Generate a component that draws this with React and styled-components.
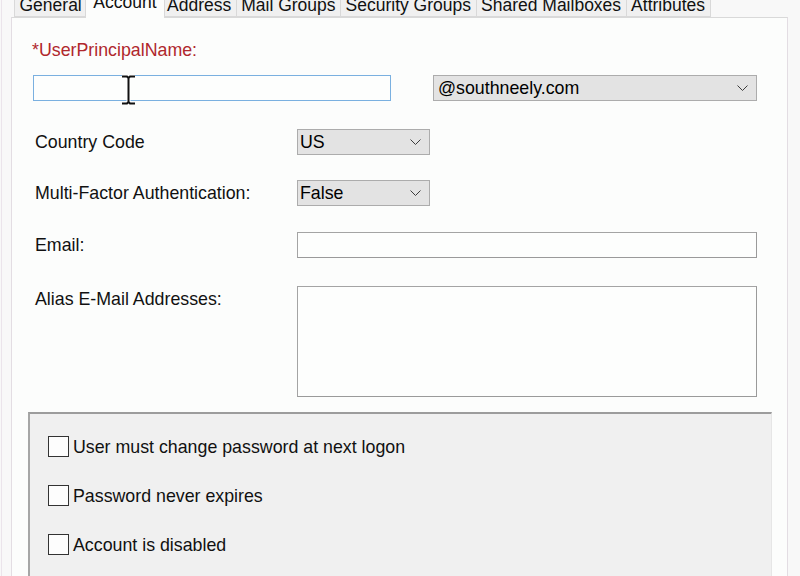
import React from "react";
import styled, { createGlobalStyle } from "styled-components";

const GlobalStyle = createGlobalStyle`
  html, body {
    margin: 0;
    padding: 0;
    background: #f8f8f8;
    overflow: hidden;
  }
  * {
    box-sizing: border-box;
  }
`;

const Page = styled.div`
  height: 576px;
  overflow: hidden;
  margin-left: 1px;
  padding-left: 9px;
  border-left: 1px solid #ebe4eb;
  font-family: "Liberation Sans", Arial, sans-serif;
  font-size: 17.8px;
  color: #111;
`;

const TabStrip = styled.div`
  display: flex;
  align-items: flex-end;
  margin-top: -11px;
  height: 28px;
  padding-left: 3px;
  font-size: 17.5px;
`;

const Tab = styled.div`
  position: relative;
  height: ${(p) => (p.$active ? "29px" : "25px")};
  margin: ${(p) => (p.$active ? "0 -2px -1px" : "0")};
  padding: 2px ${(p) => (p.$active ? "7px" : "4.5px")} 0;
  line-height: 20px;
  white-space: nowrap;
  background: ${(p) => (p.$active ? "#fcfdfc" : "#f0f0f0")};
  border: 1px solid #d9d9d9;
  border-bottom: ${(p) => (p.$active ? "none" : "1px solid #d9d9d9")};
  border-left: ${(p) => (p.$active ? "1px solid #d9d9d9" : "none")};
  z-index: ${(p) => (p.$active ? 1 : 0)};

  &:first-child {
    border-left: 1px solid #d9d9d9;
  }
`;

const Panel = styled.div`
  width: 777px;
  height: 600px;
  background: #fcfdfc;
  border: 1px solid #e3dde3;
  border-top-color: #d9d9d9;
  padding: 0 30px 0 20px;
`;

const RequiredLabel = styled.div`
  margin-top: 22px;
  line-height: 20px;
  color: #b0282c;
`;

const UpnRow = styled.div`
  display: flex;
  align-items: center;
  margin-top: 15px;
  gap: 42px;
`;

const InputWrap = styled.div`
  position: relative;
  margin-left: 1px;
`;

const TextBox = styled.div`
  width: ${(p) => p.$width || "100%"};
  height: ${(p) => p.$height || "26px"};
  background: #fdfefd;
  border: 1px solid ${(p) => (p.$focused ? "#7ab0e0" : "#a4a4a4")};
  border-right-color: ${(p) => (p.$focused ? "#7ab0e0" : "#9a9a9a")};
  border-bottom-color: ${(p) => (p.$focused ? "#7ab0e0" : "#9a9a9a")};
`;

const Cursor = styled.svg`
  position: absolute;
  left: 87px;
  top: 0;
`;

const Combo = styled.div`
  display: flex;
  align-items: center;
  justify-content: space-between;
  width: ${(p) => p.$width};
  height: 26px;
  padding: 0 8px 0 ${(p) => p.$pad || "2px"};
  background: #e3e3e3;
  border: 1px solid #acacac;
  line-height: 20px;
  color: #000;
`;

const FieldRow = styled.div`
  display: grid;
  grid-template-columns: 265px 1fr;
  align-items: ${(p) => (p.$top ? "start" : "center")};
  margin-top: ${(p) => p.$gap};
`;

const Label = styled.div`
  padding-left: 3px;
  line-height: 20px;
  margin-top: ${(p) => (p.$top ? "3px" : "0")};
`;

const OptionsBox = styled.div`
  display: flex;
  flex-direction: column;
  gap: 28px;
  width: 744px;
  height: 200px;
  margin: 15px 0 0 -4px;
  padding: 22px 0 0 18px;
  background: #f0f0f0;
  border-top: 2px solid #9c9c9c;
  border-left: 2px solid #a6a6a6;
  border-right: 1px solid #e6e6e6;
`;

const CheckRow = styled.label`
  display: flex;
  align-items: center;
  gap: 4px;
  height: 21px;
  line-height: 20px;
`;

const CheckBox = styled.span`
  width: 21px;
  height: 21px;
  background: #fdfdfd;
  border: 1px solid #333;
`;

const Chevron = () => (
  <svg width="11" height="6" viewBox="0 0 11 6">
    <polyline points="0.5,0.5 5.5,5.5 10.5,0.5" fill="none" stroke="#3c3c3c" strokeWidth="1" />
  </svg>
);

const tabs = [
  "General",
  "Account",
  "Address",
  "Mail Groups",
  "Security Groups",
  "Shared Mailboxes",
  "Attributes",
];

const options = [
  "User must change password at next logon",
  "Password never expires",
  "Account is disabled",
];

const cursorPath =
  "M2 1.5h5l1.5 1.5 1.5-1.5h5M8.5 3v24M2 28.5h5l1.5-1.5 1.5 1.5h5";

export default function App() {
  return (
    <>
      <GlobalStyle />
      <Page>
        <TabStrip>
          {tabs.map((t) => (
            <Tab key={t} $active={t === "Account"}>
              {t}
            </Tab>
          ))}
        </TabStrip>
        <Panel>
          <RequiredLabel>*UserPrincipalName:</RequiredLabel>
          <UpnRow>
            <InputWrap>
              <TextBox $width="358px" $focused />
              <Cursor width="17" height="30" viewBox="0 0 17 30">
                <path d={cursorPath} fill="none" stroke="#fff" strokeWidth="4" />
                <path d={cursorPath} fill="none" stroke="#111" strokeWidth="2" />
              </Cursor>
            </InputWrap>
            <Combo $width="324px" $pad="4px">
              <span>@southneely.com</span>
              <Chevron />
            </Combo>
          </UpnRow>
          <FieldRow $gap="28px">
            <Label>Country Code</Label>
            <Combo $width="133px">
              <span>US</span>
              <Chevron />
            </Combo>
          </FieldRow>
          <FieldRow $gap="25px">
            <Label>Multi-Factor Authentication:</Label>
            <Combo $width="133px">
              <span>False</span>
              <Chevron />
            </Combo>
          </FieldRow>
          <FieldRow $gap="26px">
            <Label>Email:</Label>
            <TextBox />
          </FieldRow>
          <FieldRow $gap="28px" $top>
            <Label $top>Alias E-Mail Addresses:</Label>
            <TextBox $height="111px" />
          </FieldRow>
          <OptionsBox>
            {options.map((o) => (
              <CheckRow key={o}>
                <CheckBox />
                {o}
              </CheckRow>
            ))}
          </OptionsBox>
        </Panel>
      </Page>
    </>
  );
}
